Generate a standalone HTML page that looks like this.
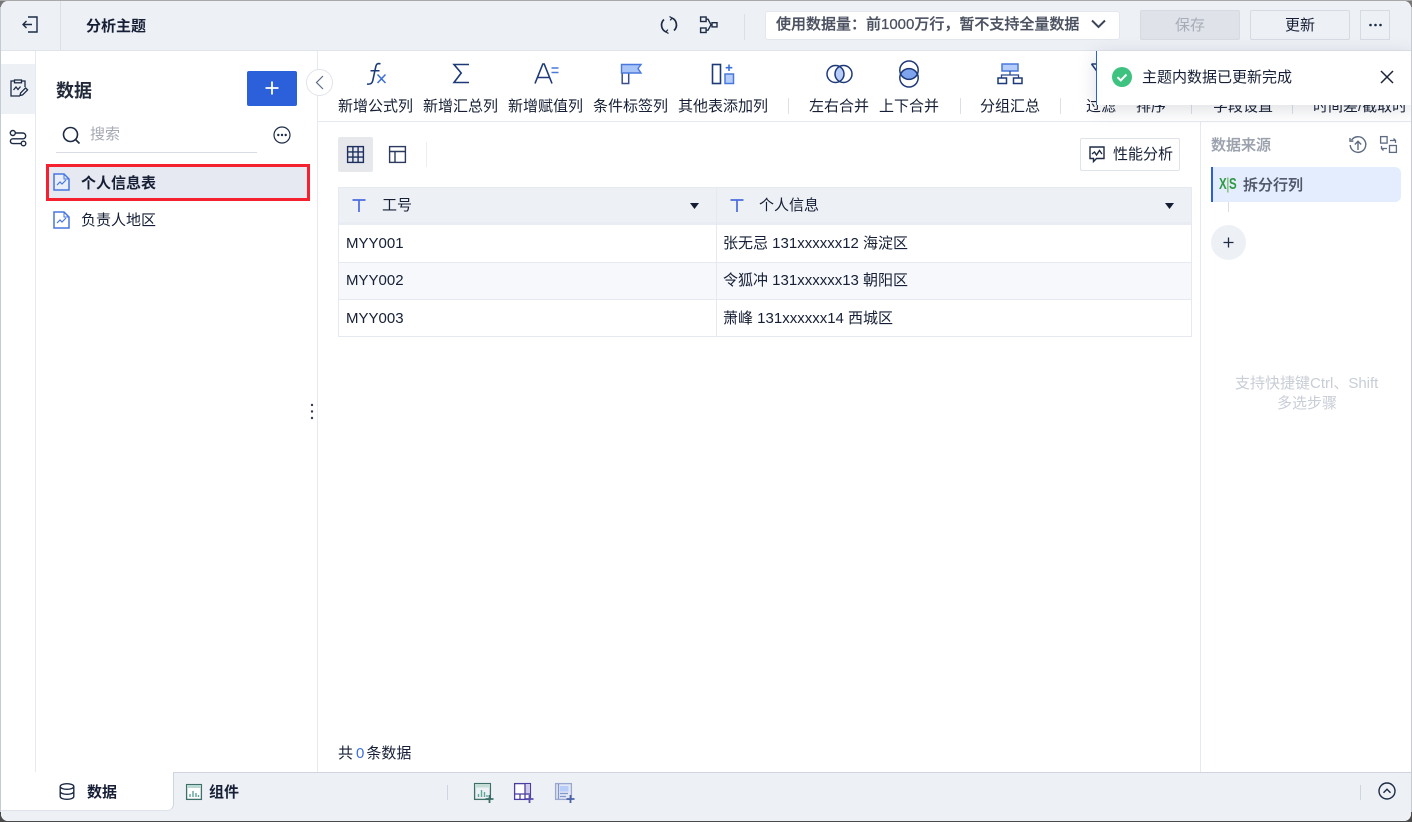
<!DOCTYPE html>
<html lang="zh">
<head>
<meta charset="utf-8">
<style>
html,body{margin:0;padding:0;width:1412px;height:822px;overflow:hidden;}
body{background:linear-gradient(#a8a8a8 0 1px,transparent 1px),linear-gradient(#777 0 7px,#c6cad2 7px 812px,#4a4a4a 812px);}
*{box-sizing:border-box;}
body{font-family:"Liberation Sans","Noto Sans CJK SC",sans-serif;font-size:15px;color:#161f35;}
#w{position:absolute;left:1px;top:1px;width:1410px;height:820px;background:#fff;border-radius:7px;overflow:hidden;}
#r{position:absolute;left:-1px;top:-1px;width:1412px;height:822px;}
.a{position:absolute;}
.t{position:absolute;white-space:nowrap;line-height:20px;height:20px;margin-top:1px;}
.b{font-weight:700;}
svg{position:absolute;overflow:visible;fill:none;}
.sep{position:absolute;width:1px;background:#dcdfe6;}
</style>
</head>
<body>
<div id="w"><div id="r">

<!-- top bar -->
<div class="a" style="left:0;top:0;width:1412px;height:51px;background:#edf0f5;border-bottom:1px solid #dfe3ea;"></div>
<div class="sep" style="left:60px;top:0;height:50px;"></div>
<svg style="left:22px;top:16px" width="18" height="18" viewBox="0 0 18 18" stroke="#1d2b45" stroke-width="1.4"><path d="M6 1.5h9v15H6M1 9h9M4.500 5.500 1 9l3.500 3.500" transform="translate(0 -.5)"/></svg>
<div class="t b" style="left:86px;top:16px;">分析主题</div>

<svg style="left:660px;top:16px" width="18" height="18" viewBox="0 0 18 18" stroke="#1d2b45" stroke-width="1.700"><path d="M4 3.500A7.600 7.600 0 0 0 6 16M14 14.500A7.600 7.600 0 0 0 12 2"/><path d="M9.500 .5 12 2l-1.800 2.400M8.500 17.500 6 16l1.800-2.400" stroke-width="1.300"/></svg>
<svg style="left:700px;top:16px" width="18" height="18" viewBox="0 0 18 18" stroke="#1d2b45" stroke-width="1.400"><rect x=".6" y="1" width="5.500" height="4.500"/><rect x=".6" y="12" width="5.500" height="4.500"/><rect x="12" y="6.700" width="5" height="4.200"/><path d="M6 3.200h2l3 5.600h1M6 14.200h2l3-5.400"/></svg>
<div class="sep" style="left:744px;top:14px;height:26px;"></div>

<div class="a" style="left:765px;top:11px;width:355px;height:29px;background:#fff;border:1px solid #e3e6ec;border-radius:3px;"></div>
<div class="t" style="left:776px;top:14px;color:#4b5160;font-weight:500;-webkit-text-stroke:.25px #4b5160;">使用数据量：前1000万行，暂不支持全量数据</div>
<svg style="left:1091px;top:19px" width="15" height="10" viewBox="0 0 15 10" stroke="#3d4657" stroke-width="2"><path d="M1 1.500 7.500 8 14 1.500"/></svg>

<div class="a" style="left:1140px;top:10px;width:100px;height:30px;background:#dfe2e9;border:1px solid #d6dae2;border-radius:2px;"></div>
<div class="t" style="left:1175px;top:15px;color:#a6acb7;">保存</div>
<div class="a" style="left:1250px;top:10px;width:100px;height:30px;background:#edf0f5;border:1px solid #d6dae2;border-radius:2px;"></div>
<div class="t" style="left:1285px;top:15px;">更新</div>
<div class="a" style="left:1360px;top:10px;width:30px;height:30px;background:#edf0f5;border:1px solid #d6dae2;"></div>
<svg style="left:1368px;top:23px" width="14" height="4" viewBox="0 0 14 4"><circle cx="2.500" cy="2" r="1.300" fill="#1d2b45"/><circle cx="7.500" cy="2" r="1.300" fill="#1d2b45"/><circle cx="12.500" cy="2" r="1.300" fill="#1d2b45"/></svg>

<!-- left rail -->
<div class="a" style="left:0;top:51px;width:36px;height:721px;background:#fff;border-right:1px solid #e6e9ef;"></div>
<div class="a" style="left:0;top:64px;width:35px;height:50px;background:#edf0f5;"></div>
<svg style="left:9px;top:79px" width="19" height="19" viewBox="0 0 19 19" stroke="#1d2b45" stroke-width="1.300"><path d="M5.500 2H2v15h9M12.500 2H16v6"/><rect x="5.500" y="1" width="7" height="2.800"/><path d="M4.500 11 7 8l2 2.500L11.500 7.500"/><path d="M11 16.500l.6-2.600 5-5 2 2-5 5z"/></svg>
<svg style="left:9px;top:129px" width="18" height="18" viewBox="0 0 18 18" stroke="#1d2b45" stroke-width="1.400"><circle cx="3.800" cy="4" r="2.500"/><circle cx="14.500" cy="14.500" r="2.300"/><path d="M6.300 4h7.500a2.900 2.900 0 0 1 0 5.800H3.800a2.400 2.400 0 0 0 0 4.800h8.400"/></svg>

<!-- sidebar -->
<div class="a" style="left:317px;top:51px;width:1px;height:721px;background:#e6e9ef;"></div>
<div class="t b" style="left:56px;top:79px;font-size:18px;line-height:22px;height:22px;color:#232b3a;">数据</div>
<div class="a" style="left:247px;top:71px;width:50px;height:35px;background:#2c60db;border-radius:2px;"></div>
<svg style="left:265px;top:81px" width="14" height="14" viewBox="0 0 14 14" stroke="#fff" stroke-width="1.800"><path d="M7 .5v13M.5 7h13"/></svg>
<svg style="left:62px;top:126px" width="19" height="19" viewBox="0 0 19 19" stroke="#1d2b45" stroke-width="1.600"><circle cx="8.500" cy="8.500" r="7"/><path d="M13.500 13.500 17.500 17.500"/></svg>
<div class="t" style="left:90px;top:124px;color:#a5a9b3;">搜索</div>
<div class="a" style="left:56px;top:152px;width:201px;height:1px;background:#d9dce4;"></div>
<svg style="left:273px;top:126px" width="18" height="18" viewBox="0 0 18 18" stroke="#1d2b45" stroke-width="1.200"><circle cx="9" cy="9" r="8"/><circle cx="5.300" cy="9" r=".6" fill="#1d2b45"/><circle cx="9" cy="9" r=".6" fill="#1d2b45"/><circle cx="12.700" cy="9" r=".6" fill="#1d2b45"/></svg>

<div class="a" style="left:46px;top:164px;width:264px;height:37px;background:#e6e9f1;border:3px solid #f5212e;"></div>
<svg style="left:53px;top:173px" width="17" height="18" viewBox="0 0 17 18"><path d="M1 1h10l5 5v11H1z" fill="#e9eefb" stroke="#4877de" stroke-width="1.500"/><path d="M11 1v5h5" stroke="#4877de" stroke-width="1"/><path d="M4 12l3-3 2 2 4-4" stroke="#4877de" stroke-width="1.200"/></svg>
<div class="t b" style="left:81px;top:173px;">个人信息表</div>
<svg style="left:53px;top:211px" width="17" height="18" viewBox="0 0 17 18"><path d="M1 1h10l5 5v11H1z" fill="#fff" stroke="#4877de" stroke-width="1.500"/><path d="M11 1v5h5" stroke="#4877de" stroke-width="1"/><path d="M4 12l3-3 2 2 4-4" stroke="#4877de" stroke-width="1.200"/></svg>
<div class="t" style="left:81px;top:210px;">负责人地区</div>

<svg style="left:310px;top:403px" width="4" height="18" viewBox="0 0 4 18"><circle cx="2" cy="2" r="1.200" fill="#333c4e"/><circle cx="2" cy="8.500" r="1.200" fill="#333c4e"/><circle cx="2" cy="15" r="1.200" fill="#333c4e"/></svg>

<!-- toolbar -->
<div class="a" style="left:318px;top:121px;width:1094px;height:1px;background:#e6e9ef;"></div>

<svg style="left:364px;top:62px" width="24" height="24" viewBox="0 0 24 24"><path d="M16.500 1.800C13.500 1 12.300 2 11.700 5L8.800 18.500C8.200 21.500 6.500 22.500 3 22" stroke="#1d3a78" stroke-width="1.600"/><path d="M6.500 8.800h9" stroke="#1d3a78" stroke-width="1.500"/><path d="M13.500 12.500l8 8.500M21.500 12.500l-8 8.500" stroke="#3d6fd8" stroke-width="1.500"/></svg>
<svg style="left:451px;top:63px" width="20" height="20" viewBox="0 0 20 20" stroke="#1d3a78" stroke-width="1.600"><path d="M18 1.500H3l7.200 8.500L3 19.500h15"/></svg>
<svg style="left:534px;top:63px" width="26" height="22" viewBox="0 0 26 22"><path d="M1 20.500 8.800 1h1.400L18 20.500M4 14.500h11" stroke="#1d3a78" stroke-width="1.600"/><path d="M17.500 5h7M17.500 9.500h7" stroke="#4a78dc" stroke-width="1.500"/></svg>
<svg style="left:620px;top:63px" width="22" height="21" viewBox="0 0 22 21"><path d="M2.200 10v10.500h6.500V10" stroke="#3a4f8a" stroke-width="1.500" fill="#fff"/><path d="M1.500 1.500h19.500l-3 4 3 4.500H1.500z" fill="#a9c4f7" stroke="#4a78dc" stroke-width="1.400"/></svg>
<svg style="left:711px;top:63px" width="24" height="22" viewBox="0 0 24 22"><rect x="1.500" y="1.500" width="8" height="19" stroke="#1d3a78" stroke-width="1.600"/><path d="M18 1.500v6.500M14.700 4.700h6.600" stroke="#3d6fd8" stroke-width="1.600"/><rect x="14" y="11" width="8.500" height="9.500" fill="#b5cdf8" stroke="#4a78dc" stroke-width="1.500"/></svg>
<svg style="left:825px;top:61px" width="28" height="26" viewBox="0 0 28 26"><path d="M14.500 5.500c2.500 2 4.500 4.600 4.500 7.500s-2 5.500-4.500 7.500c-2.500-2-4.500-4.600-4.500-7.500s2-5.500 4.500-7.500z" fill="#b5cdf8"/><circle cx="10.500" cy="13" r="8.500" stroke="#1d3a78" stroke-width="1.500"/><circle cx="18.500" cy="13" r="8.500" stroke="#1d3a78" stroke-width="1.500"/></svg>
<svg style="left:896px;top:60px" width="26" height="28" viewBox="0 0 26 28"><path d="M4.600 14c2.400-3.600 5.200-5.400 8.400-5.400s6 1.800 8.400 5.400c-2.400 3.600-5.200 5.400-8.400 5.400s-6-1.800-8.400-5.400z" fill="#7ea4ee"/><circle cx="13" cy="10.200" r="9.200" stroke="#1d3a78" stroke-width="1.500"/><circle cx="13" cy="17.800" r="9.200" stroke="#1d3a78" stroke-width="1.500"/></svg>
<svg style="left:997px;top:63px" width="26" height="22" viewBox="0 0 26 22"><rect x="5" y="1" width="16" height="7" fill="#b5cdf8" stroke="#4a78dc" stroke-width="1.500"/><path d="M13 8v4M4.500 15v-3h17v3" stroke="#2b4a90" stroke-width="1.300"/><rect x="1" y="15" width="8.500" height="5.500" stroke="#1d3a78" stroke-width="1.500"/><rect x="16.500" y="15" width="8.500" height="5.500" stroke="#1d3a78" stroke-width="1.500"/></svg>
<svg style="left:1088px;top:62px" width="12" height="14" viewBox="0 0 12 14"><path d="M3.500 2h9M3.500 2l6 8" stroke="#1d3a78" stroke-width="1.500"/></svg>

<div class="t" style="left:338px;top:96px;">新增公式列</div>
<div class="t" style="left:423px;top:96px;">新增汇总列</div>
<div class="t" style="left:508px;top:96px;">新增赋值列</div>
<div class="t" style="left:593px;top:96px;">条件标签列</div>
<div class="t" style="left:678px;top:96px;">其他表添加列</div>
<div class="t" style="left:809px;top:96px;">左右合并</div>
<div class="t" style="left:879px;top:96px;">上下合并</div>
<div class="t" style="left:980px;top:96px;">分组汇总</div>
<div class="t" style="left:1086px;top:96px;">过滤</div>
<div class="t" style="left:1136px;top:96px;">排序</div>
<div class="t" style="left:1213px;top:96px;">字段设置</div>
<div class="t" style="left:1313px;top:96px;">时间差/截取时</div>
<div class="sep" style="left:788px;top:98px;height:16px;"></div>
<div class="sep" style="left:960px;top:98px;height:16px;"></div>
<div class="sep" style="left:1060px;top:98px;height:16px;"></div>
<div class="sep" style="left:1191px;top:98px;height:16px;"></div>
<div class="sep" style="left:1292px;top:98px;height:16px;"></div>

<!-- collapse -->
<div class="a" style="left:306px;top:69px;width:27px;height:27px;border-radius:50%;background:#fff;border:1px solid #e1e4ea;"></div>
<svg style="left:315px;top:75px" width="9" height="15" viewBox="0 0 9 15" stroke="#5b6a88" stroke-width="1.200"><path d="M8 1 1.500 7.500 8 14"/></svg>

<!-- main view controls -->
<div class="a" style="left:338px;top:137px;width:35px;height:35px;background:#e6e8ec;border-radius:2px;"></div>
<svg style="left:347px;top:146px" width="17" height="17" viewBox="0 0 17 17" stroke="#1d3060" stroke-width="1.400"><rect x=".6" y=".6" width="15.800" height="15.800"/><path d="M.6 5.900h15.800M.6 11.100h15.800M5.900.6v15.800M11.100.6v15.800"/></svg>
<svg style="left:389px;top:146px" width="17" height="17" viewBox="0 0 17 17" stroke="#2b3a5e" stroke-width="1.400"><rect x=".6" y=".6" width="15.800" height="15.800"/><path d="M.6 5.500h15.800M6 5.500v10.900"/></svg>
<div class="sep" style="left:426px;top:142px;height:25px;background:#eceef2;"></div>

<div class="a" style="left:1080px;top:138px;width:100px;height:33px;background:#fff;border:1px solid #dfe3ea;border-radius:2px;"></div>
<svg style="left:1089px;top:146px" width="16" height="17" viewBox="0 0 16 17" stroke="#1d2b45" stroke-width="1.400"><path d="M1 1h14v11.500H7.500L4.500 15.500v-3H1z"/><path d="M3 8l2.500-2 2 3 3-4.500 2.500 3.500"/></svg>
<div class="t" style="left:1113px;top:144px;">性能分析</div>

<!-- table -->
<div class="a" style="left:338px;top:187px;width:854px;height:150px;border:1px solid #e6e9ef;background:#fff;"></div>
<div class="a" style="left:339px;top:188px;width:852px;height:34px;background:#edf0f5;"></div>
<div class="a" style="left:339px;top:222px;width:852px;height:3px;background:#e9ecf2;"></div>
<div class="a" style="left:339px;top:263px;width:852px;height:36px;background:#f7f8fc;"></div>
<div class="a" style="left:339px;top:262px;width:852px;height:1px;background:#e6e9ef;"></div>
<div class="a" style="left:339px;top:299px;width:852px;height:1px;background:#e6e9ef;"></div>
<div class="a" style="left:716px;top:188px;width:1px;height:148px;background:#e6e9ef;"></div>

<svg style="left:352px;top:199px" width="14" height="13" viewBox="0 0 14 13" stroke="#4a6be0" stroke-width="1.700"><path d="M.500 1h13M7 1v12"/></svg>
<div class="t" style="left:382px;top:195px;">工号</div>
<svg style="left:690px;top:203px" width="9" height="6" viewBox="0 0 9 6"><path d="M0 0h9L4.500 6z" fill="#141d33"/></svg>
<svg style="left:730px;top:199px" width="14" height="13" viewBox="0 0 14 13" stroke="#4a6be0" stroke-width="1.700"><path d="M.500 1h13M7 1v12"/></svg>
<div class="t" style="left:759px;top:195px;">个人信息</div>
<svg style="left:1165px;top:203px" width="9" height="6" viewBox="0 0 9 6"><path d="M0 0h9L4.500 6z" fill="#141d33"/></svg>

<div class="t" style="left:346px;top:233px;">MYY001</div>
<div class="t" style="left:723px;top:233px;">张无忌 131xxxxxx12 海淀区</div>
<div class="t" style="left:346px;top:270px;">MYY002</div>
<div class="t" style="left:723px;top:270px;">令狐冲 131xxxxxx13 朝阳区</div>
<div class="t" style="left:346px;top:308px;">MYY003</div>
<div class="t" style="left:723px;top:308px;">萧峰 131xxxxxx14 西城区</div>

<div class="t" style="left:338px;top:743px;">共<span style="color:#3f6fdc;margin:0 2px 0 3px;">0</span>条数据</div>

<!-- right panel -->
<div class="a" style="left:1200px;top:122px;width:1px;height:650px;background:#e6e9ef;"></div>
<div class="t" style="left:1211px;top:135px;color:#9aa0ac;font-weight:500;-webkit-text-stroke:.2px #9aa0ac;">数据来源</div>
<svg style="left:1349px;top:136px" width="18" height="18" viewBox="0 0 18 18" stroke="#5e6b80" stroke-width="1.400"><path d="M2.500 4.200A7.800 7.800 0 1 1 1.200 9"/><path d="M1 2v3.200h3.400M9 14V5.500M5.800 8.500 9 5.300l3.200 3.200"/></svg>
<svg style="left:1380px;top:136px" width="17" height="17" viewBox="0 0 17 17" stroke="#5e6b80" stroke-width="1.300"><rect x=".6" y=".6" width="6.500" height="6.500"/><rect x="9.500" y="9.500" width="6.900" height="6.900"/><path d="M10 4.500h5.500V7M13.500 2.500l2 2M7 12.500H1.500V10M3.500 14.500l-2-2"/></svg>

<div class="a" style="left:1211px;top:167px;width:190px;height:35px;background:#e3edfd;border-left:2px solid #2c60db;border-radius:0 6px 6px 0;"></div>
<div class="t" style="left:1219px;top:174px;color:#2f9a46;font-size:16px;font-weight:700;letter-spacing:-.5px;transform:scaleX(.72);transform-origin:left;">X<span style="color:#5aa23a;font-weight:400">|</span>S</div>
<div class="t" style="left:1243px;top:175px;color:#4d5668;font-weight:500;-webkit-text-stroke:.2px #4d5668;">拆分行列</div>
<div class="a" style="left:1228px;top:202px;width:1px;height:10px;background:#d9dce4;"></div>
<div class="a" style="left:1211px;top:225px;width:35px;height:35px;border-radius:50%;background:#edf0f5;"></div>
<svg style="left:1223px;top:237px" width="11" height="11" viewBox="0 0 11 11" stroke="#1d2b45" stroke-width="1.300"><path d="M5.500 .5v10M.5 5.500h10"/></svg>
<div class="t" style="left:1235px;top:373px;color:#c8cdd6;">支持快捷键Ctrl、Shift</div>
<div class="t" style="left:1277px;top:393px;color:#c8cdd6;">多选步骤</div>

<!-- toast -->
<div class="a" style="left:1096px;top:51px;width:316px;height:54px;background:#fff;border-left:1px solid #2c60db;box-shadow:0 4px 18px rgba(60,70,90,.18);"></div>
<svg style="left:1112px;top:67px" width="20" height="20" viewBox="0 0 20 20"><circle cx="10" cy="10" r="10" fill="#3ec27f"/><path d="M5.500 10.200 8.800 13.500 14.500 7.500" stroke="#fff" stroke-width="2"/></svg>
<div class="t" style="left:1142px;top:67px;">主题内数据已更新完成</div>
<svg style="left:1380px;top:70px" width="14" height="14" viewBox="0 0 14 14" stroke="#1b2436" stroke-width="1.500"><path d="M1 1l12 12M13 1 1 13"/></svg>

<!-- bottom bar -->
<div class="a" style="left:0;top:772px;width:1412px;height:50px;background:#edf0f5;border-top:1px solid #cfd4de;"></div>
<div class="a" style="left:0;top:772px;width:174px;height:39px;background:#fff;border-right:1px solid #cfd4de;border-bottom:1px solid #dfe3ea;border-radius:0 0 7px 0;"></div>
<svg style="left:59px;top:783px" width="16" height="17" viewBox="0 0 16 17" stroke="#1d2b45" stroke-width="1.400"><ellipse cx="8" cy="3.500" rx="6.800" ry="2.800"/><path d="M1.200 3.500v10c0 1.500 3 2.800 6.800 2.800s6.800-1.300 6.800-2.800v-10M1.200 8.500c0 1.500 3 2.800 6.800 2.800s6.800-1.300 6.800-2.800"/></svg>
<div class="t b" style="left:87px;top:782px;">数据</div>
<svg style="left:186px;top:784px" width="16" height="16" viewBox="0 0 16 16"><rect x=".6" y=".6" width="14.800" height="14.800" fill="#fff" stroke="#3f6f6a" stroke-width="1.300"/><rect x="1" y="1" width="14" height="3" fill="#bcd8d2"/><path d="M4 13V10M7 13V7M10 13V9M12.500 13v-2" stroke="#5fa59a" stroke-width="1.400"/></svg>
<div class="t b" style="left:209px;top:782px;">组件</div>
<div class="a" style="left:447px;top:785px;width:1px;height:15px;background:#cfd4de;"></div>

<svg style="left:474px;top:783px" width="20" height="20" viewBox="0 0 20 20"><rect x=".6" y=".6" width="15.800" height="15.800" fill="#edf0f5" stroke="#3f6f6a" stroke-width="1.300"/><rect x="1" y="1" width="15" height="3.500" fill="#c4dcd6"/><path d="M4.500 14V11M7.500 14V7M10.500 14V9M13 14v-2" stroke="#5fa59a" stroke-width="1.400"/><path d="M15.500 12v8M11.500 16h8" stroke="#3f6f6a" stroke-width="1.800"/></svg>
<svg style="left:514px;top:783px" width="20" height="20" viewBox="0 0 20 20"><rect x=".6" y=".6" width="15.800" height="15.800" fill="#fff" stroke="#4a3fa0" stroke-width="1.300"/><rect x="11" y="1" width="5" height="11" fill="#cfcbea"/><path d="M11 .6v15.800M.6 11h15.800M6 11v5.400" stroke="#4a3fa0" stroke-width="1.300"/><path d="M15.500 12v8M11.500 16h8" stroke="#5a50ad" stroke-width="1.800"/></svg>
<svg style="left:555px;top:783px" width="20" height="20" viewBox="0 0 20 20"><rect x=".6" y=".6" width="15.800" height="15.800" fill="#e2e7f3" stroke="#9aa8cf" stroke-width="1.300"/><rect x="5" y="3" width="8.500" height="5.500" fill="#b5cdf8"/><path d="M3.500 1v15M5 10.500h8M5 13.500h6" stroke="#8096cc" stroke-width="1.200"/><path d="M15.500 12v8M11.500 16h8" stroke="#4a63a8" stroke-width="1.800"/></svg>

<div class="a" style="left:1360px;top:785px;width:1px;height:15px;background:#cfd4de;"></div>
<svg style="left:1378px;top:782px" width="18" height="18" viewBox="0 0 18 18" stroke="#1d2b45" stroke-width="1.400"><circle cx="9" cy="9" r="8"/><path d="M5.500 10.800 9 7.300l3.500 3.500"/></svg>

</div></div>
</body>
</html>
